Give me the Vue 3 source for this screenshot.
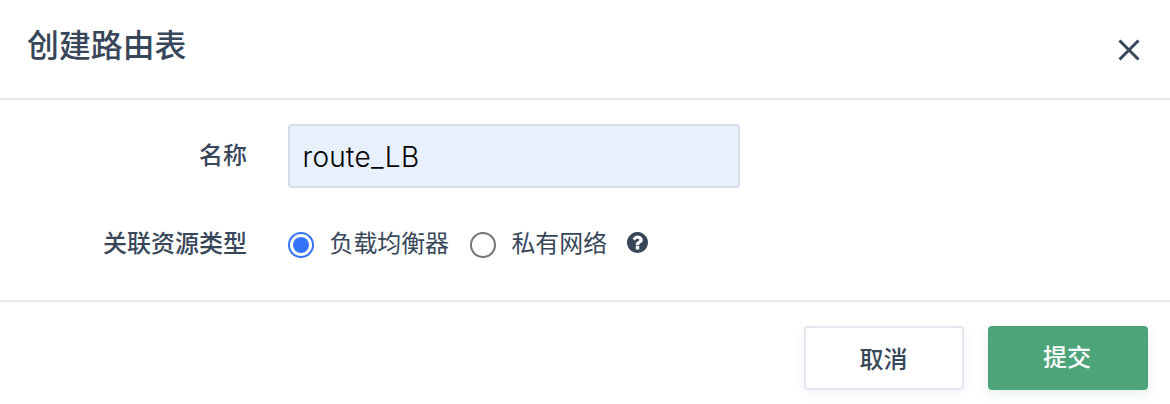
<script setup>
import { ref } from 'vue'

const name = ref('route_LB')
const type = ref('lb')
const options = [
  { value: 'lb', label: '负载均衡器' },
  { value: 'vpc', label: '私有网络' },
]
</script>

<template>
  <div class="dialog">
    <header class="head">
      <h1 class="title">创建路由表</h1>
      <button class="close" aria-label="close">
        <svg width="22" height="22" viewBox="0 0 22 22"><path d="M1.5 1.5 20.5 20.5M20.5 1.5 1.5 20.5" /></svg>
      </button>
    </header>
    <main class="body">
      <div class="row name-row">
        <label class="label">名称</label>
        <input v-model="name" class="input" type="text" />
      </div>
      <div class="row">
        <span class="label">关联资源类型</span>
        <label v-for="o in options" :key="o.value" class="option" @click="type = o.value">
          <svg class="radio" :class="{ on: type === o.value }" width="26" height="26" viewBox="0 0 26 26">
            <circle class="ring" cx="13" cy="13" r="12" />
            <circle v-if="type === o.value" class="dot" cx="13" cy="13" r="8" />
          </svg>
          <span class="text">{{ o.label }}</span>
        </label>
        <svg class="help" width="21" height="21" viewBox="0 128 1536 1536">
          <path d="M896 1376v-192q0-14-9-23t-23-9h-192q-14 0-23 9t-9 23v192q0 14 9 23t23 9h192q14 0 23-9t9-23zm256-672q0-88-55.5-163t-138.5-116-170-41q-243 0-371 213-15 24 8 42l132 100q7 6 19 6 16 0 25-12 53-68 86-92 34-24 86-24 48 0 85.5 26t37.500 59q0 38-20 61t-68 45q-63 28-115.500 86.500t-52.500 125.500v36q0 14 9 23t23 9h192q14 0 23-9t9-23q0-19 21.500-49.500t54.500-49.500q32-18 49-28.500t46-35 44.500-48 28-60.500 12.500-81zm384 192q0 209-103 385.500t-279.500 279.500-385.500 103-385.500-103-279.500-279.500-103-385.500 103-385.500 279.500-279.500 385.500-103 385.500 103 279.500 279.500 103 385.500z" />
        </svg>
      </div>
    </main>
    <footer class="foot">
      <button class="btn cancel">取消</button>
      <button class="btn submit">提交</button>
    </footer>
  </div>
</template>

<style>
body { background: #fff; }
</style>

<style scoped>
.dialog {
  box-sizing: border-box;
  width: 1170px;
  height: 404px;
  overflow: hidden;
  color: #38465a;
  font-family: "Liberation Sans", "Noto Sans CJK SC", sans-serif;
}
.head {
  box-sizing: border-box;
  height: 100px;
  display: flex;
  justify-content: space-between;
  padding: 22px 30px 0 27px;
  border-bottom: 2px solid #e4e9ef;
}
.title { margin: 0; font-size: 31.9px; line-height: 48px; font-weight: 500; }
.close { margin: 17px 0 0; padding: 0; width: 22px; height: 22px; border: 0; background: none; }
.close svg { display: block; fill: none; stroke: #38465a; stroke-width: 3; }
.body { box-sizing: border-box; height: 202px; padding-top: 24px; border-bottom: 2px solid #e4e8f0; }
.row { display: flex; align-items: center; height: 64px; }
.name-row { margin-bottom: 25px; }
.label { width: 247px; margin-right: 41px; text-align: right; font-size: 24px; font-weight: 500; line-height: 36px; }
.row:not(.name-row) .label, .text { margin-top: -2px; }
.input {
  box-sizing: border-box;
  width: 452px;
  height: 64px;
  padding: 1px 12.5px 0;
  border: 2px solid #d6dee7;
  border-radius: 4px;
  background: #e8effd;
  color: #000;
  font: 300 28px Inter, "Liberation Sans", sans-serif;
  letter-spacing: 0.3px;
  outline: 0;
}
.option { display: flex; align-items: center; margin-right: 21px; font-size: 23.9px; line-height: 36px; }
.radio { margin-right: 15.5px; fill: none; stroke: #757575; stroke-width: 2; }
.radio.on { stroke: #3474f8; }
.radio .dot { fill: #3474f8; stroke: none; }
.help { margin: -5px 0 0 -1px; fill: #38465a; }
.foot { display: flex; justify-content: flex-end; gap: 24px; padding: 24px 22px 0; }
.btn {
  box-sizing: border-box;
  width: 160px;
  height: 64px;
  padding: 0 2px 0 0;
  border: 2px solid #e3e8f0;
  border-radius: 4px;
  background: #fff;
  color: #38465a;
  font: 500 24px/36px "Liberation Sans", "Noto Sans CJK SC", sans-serif;
}
.cancel { padding: 3px 1px 0 0; box-shadow: 0 4px 12px rgba(70, 90, 160, 0.06); }
.submit {
  border-color: #4ea479;
  background: #4ea479;
  color: #fff;
  box-shadow: 0 4px 12px rgba(78, 164, 121, 0.16);
}
</style>
